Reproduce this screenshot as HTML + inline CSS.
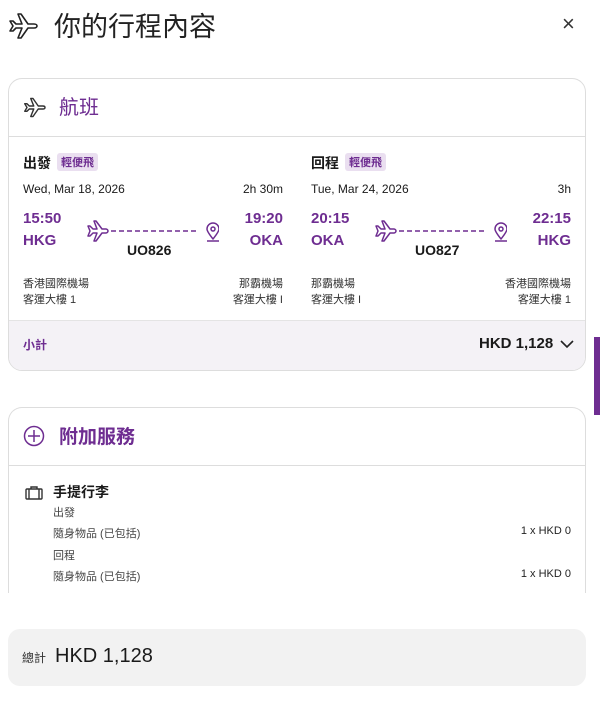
<!DOCTYPE html>
<html><head><meta charset="utf-8"><style>
*{margin:0;padding:0;box-sizing:border-box}
body{width:600px;height:703px;overflow:hidden;background:#fff;font-family:"Liberation Sans","Noto Sans CJK TC",sans-serif;color:#1a1a1a;position:relative}
.abs{position:absolute}
.p{color:#6e2d91}
.card{position:absolute;left:8px;width:578px;border:1px solid #ddd;border-radius:14px;background:#fff;overflow:hidden}
.tag{display:inline-block;background:#eadff0;color:#6e2d91;font-size:11px;padding:1px 4px;border-radius:3px;margin-left:6px;vertical-align:2px}
.b{font-weight:bold}
.s{font-size:11px}
</style></head><body>
<svg class="abs" style="left:8px;top:12px" width="30" height="28" viewBox="0 0 30 28" fill="none" stroke="#222" stroke-width="1.6" stroke-linejoin="round"><path d="M2 9L5 14L2 19H5L8 16H14L10 26H13L20 16H26C28 16 29 15 29 14C29 13 28 12 26 12H20L13 2H10L14 12H8L5 9Z"/></svg>
<div class="abs" style="left:54px;top:5px;font-size:27px;color:#222">你的行程內容</div>
<div class="abs" style="left:562px;top:11px;font-size:22px;color:#333">×</div>

<div class="card" style="top:78px;height:293px">
 <svg class="abs" style="left:14px;top:18px" width="23" height="21" viewBox="0 0 30 28" fill="none" stroke="#333" stroke-width="1.9" stroke-linejoin="round"><path d="M2 9L5 14L2 19H5L8 16H14L10 26H13L20 16H26C28 16 29 15 29 14C29 13 28 12 26 12H20L13 2H10L14 12H8L5 9Z"/></svg>
 <div class="abs p" style="left:50px;top:12px;font-size:20px">航班</div>
 <div class="abs" style="left:0;top:57px;width:100%;border-top:1px solid #ddd"></div>
 <div class="abs" style="left:0;top:241px;width:100%;height:52px;background:#f4f2f6;border-top:1px solid #e4e4e4"></div>
 <div class="abs b" style="left:14px;top:257px;font-size:12px;color:#6e2d91">小計</div>
 <div class="abs b" style="left:470px;top:256px;font-size:15px">HKD 1,128</div>
 <svg class="abs" style="left:551px;top:261px" width="14" height="9" viewBox="0 0 14 9"><path d="M1 1l6 6 6-6" stroke="#222" stroke-width="1.6" fill="none"/></svg>
 <div class="abs" style="left:14px;top:72px;width:260px;height:160px">
  <div class="abs b" style="left:0;top:2px;font-size:14px">出發<span class="tag">輕便飛</span></div>
  <div class="abs" style="left:0;top:31px;font-size:12px">Wed, Mar 18, 2026</div>
  <div class="abs" style="right:0;top:31px;font-size:12px">2h 30m</div>
  <div class="abs p b" style="left:0;top:59px;font-size:15px">15:50</div>
  <div class="abs p b" style="left:0;top:81px;font-size:15px">HKG</div>
  <div class="abs p b" style="right:0;top:59px;font-size:15px">19:20</div>
  <div class="abs p b" style="right:0;top:81px;font-size:15px">OKA</div>
  <svg class="abs" style="left:64px;top:68px" width="132" height="24" viewBox="0 0 132 24" fill="none" stroke="#6e2d91" stroke-width="1.5" stroke-linejoin="round"><path d="M1 7L3 12L1 17H3L6 14H10L7 22H9L15 14H19C20 14 21 13 21 12C21 11 20 10 19 10H15L9 2H7L10 10H6L3 7Z"/><path d="M24 12h88" stroke-dasharray="5 3"/><path d="M126 20c-4-5-6-8-6-10a6 6 0 0112 0c0 2-2 5-6 10z"/><circle cx="126" cy="10" r="2"/><path d="M120 22h12"/></svg>
  <div class="abs b" style="left:104px;top:91px;font-size:14px">UO826</div>
  <div class="abs s" style="left:0;top:124px;color:#333">香港國際機場<br>客運大樓 1</div>
  <div class="abs s" style="right:0;top:124px;color:#333;text-align:right">那霸機場<br>客運大樓 I</div>
 </div>
 <div class="abs" style="left:302px;top:72px;width:260px;height:160px">
  <div class="abs b" style="left:0;top:2px;font-size:14px">回程<span class="tag">輕便飛</span></div>
  <div class="abs" style="left:0;top:31px;font-size:12px">Tue, Mar 24, 2026</div>
  <div class="abs" style="right:0;top:31px;font-size:12px">3h</div>
  <div class="abs p b" style="left:0;top:59px;font-size:15px">20:15</div>
  <div class="abs p b" style="left:0;top:81px;font-size:15px">OKA</div>
  <div class="abs p b" style="right:0;top:59px;font-size:15px">22:15</div>
  <div class="abs p b" style="right:0;top:81px;font-size:15px">HKG</div>
  <svg class="abs" style="left:64px;top:68px" width="132" height="24" viewBox="0 0 132 24" fill="none" stroke="#6e2d91" stroke-width="1.5" stroke-linejoin="round"><path d="M1 7L3 12L1 17H3L6 14H10L7 22H9L15 14H19C20 14 21 13 21 12C21 11 20 10 19 10H15L9 2H7L10 10H6L3 7Z"/><path d="M24 12h88" stroke-dasharray="5 3"/><path d="M126 20c-4-5-6-8-6-10a6 6 0 0112 0c0 2-2 5-6 10z"/><circle cx="126" cy="10" r="2"/><path d="M120 22h12"/></svg>
  <div class="abs b" style="left:104px;top:91px;font-size:14px">UO827</div>
  <div class="abs s" style="left:0;top:124px;color:#333">那霸機場<br>客運大樓 I</div>
  <div class="abs s" style="right:0;top:124px;color:#333;text-align:right">香港國際機場<br>客運大樓 1</div>
 </div>
</div>

<div class="card" style="top:407px;height:200px;border-bottom:none;border-radius:14px 14px 0 0">
 <svg class="abs" style="left:14px;top:17px" width="22" height="22" viewBox="0 0 22 22" fill="none" stroke="#6e2d91" stroke-width="1.5"><circle cx="11" cy="11" r="9.5"/><path d="M11 5v12M5 11h12"/></svg>
 <div class="abs p b" style="left:50px;top:14px;font-size:19px">附加服務</div>
 <div class="abs" style="left:0;top:57px;width:100%;border-top:1px solid #ddd"></div>
 <svg class="abs" style="left:16px;top:78px" width="18" height="14" viewBox="0 0 18 14" fill="none" stroke="#333" stroke-width="1.4"><rect x="1" y="3" width="16" height="10" rx="1"/><path d="M6 3V1h6v2M4 3v10M14 3v10"/></svg>
 <div class="abs b" style="left:44px;top:74px;font-size:14px">手提行李</div>
 <div class="abs s" style="left:44px;top:96px;color:#444">出發</div>
 <div class="abs s" style="left:44px;top:117px;color:#444">隨身物品 (已包括)</div>
 <div class="abs s" style="right:14px;top:117px;color:#222">1 x HKD 0</div>
 <div class="abs s" style="left:44px;top:139px;color:#444">回程</div>
 <div class="abs s" style="left:44px;top:160px;color:#444">隨身物品 (已包括)</div>
 <div class="abs s" style="right:14px;top:160px;color:#222">1 x HKD 0</div>
</div>
<div class="abs" style="left:0;top:593px;width:600px;height:36px;background:#fff"></div>

<div class="abs" style="left:8px;top:629px;width:578px;height:57px;background:#f2f2f2;border-radius:12px">
 <div class="abs" style="left:14px;top:20px;font-size:12px;color:#333">總計</div>
 <div class="abs" style="left:47px;top:16px;font-size:20px;color:#1a1a1a">HKD 1,128</div>
</div>
<div class="abs" style="left:594px;top:337px;width:6px;height:78px;background:#6e2d91"></div>
</body></html>
